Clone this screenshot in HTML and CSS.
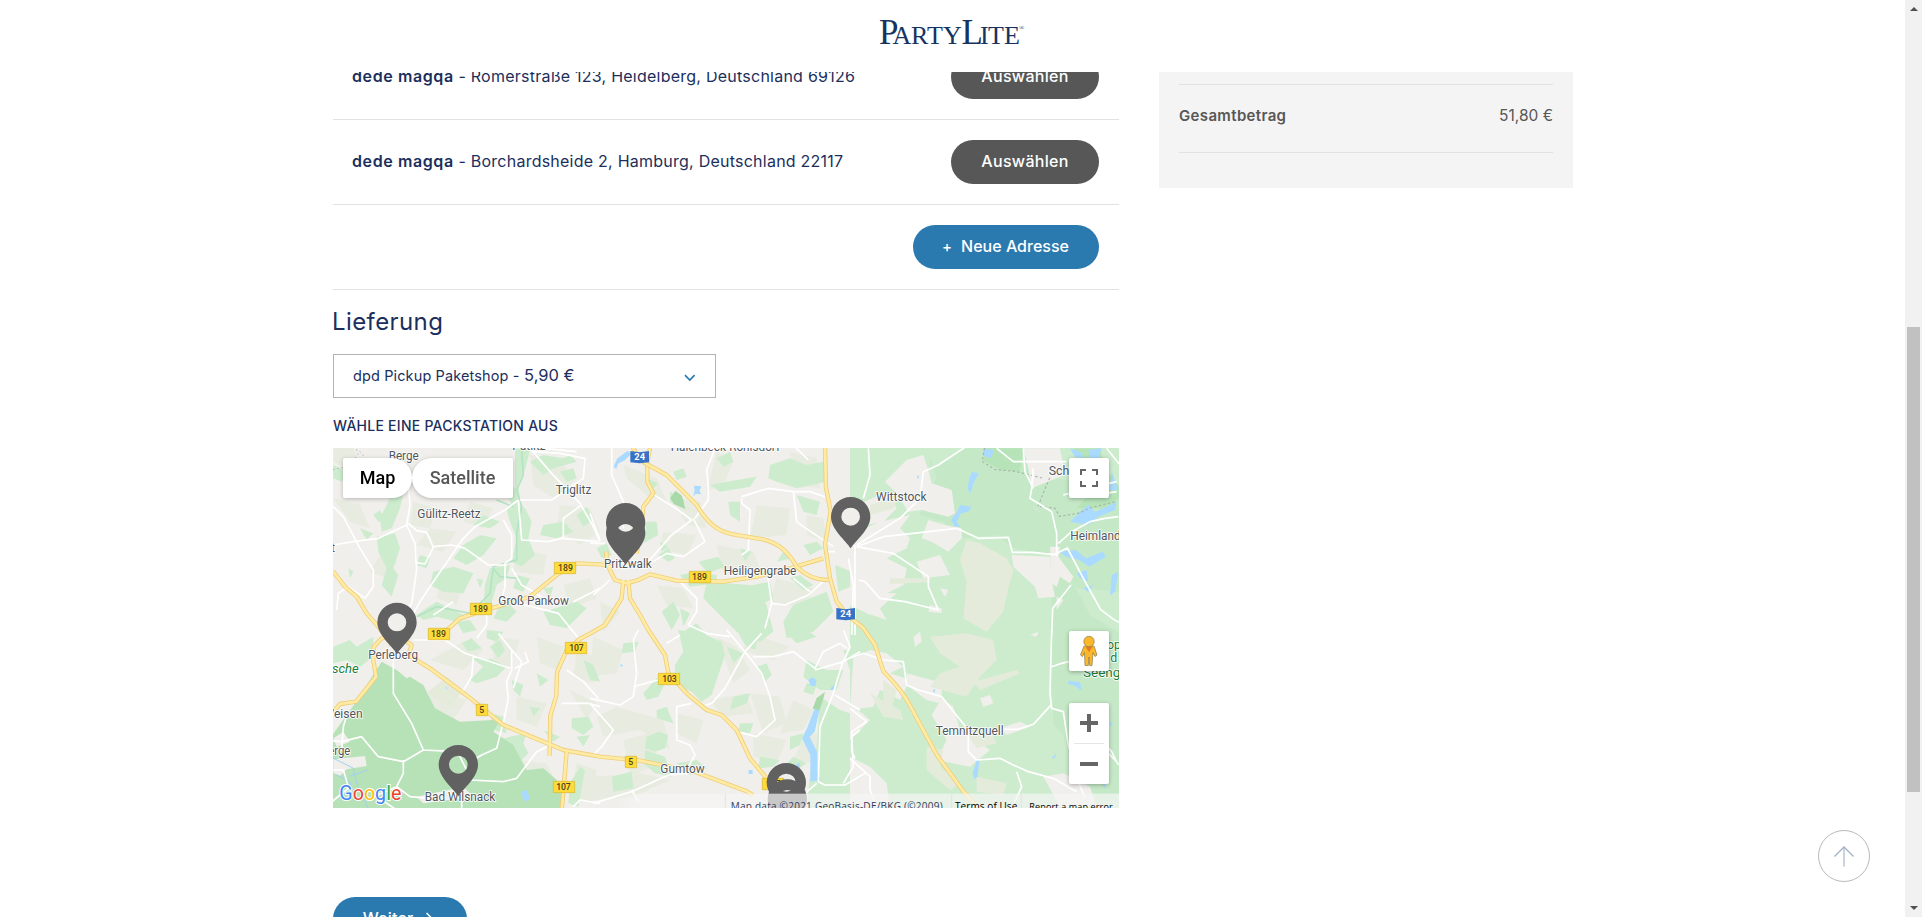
FILE: index.html
```html
<!DOCTYPE html>
<html lang="de">
<head>
<meta charset="utf-8">
<title>PartyLite – Kasse</title>
<link rel="stylesheet" href="styles.css">
</head>
<body>
<header class="header">
  <svg class="logo" width="146" height="32" viewBox="0 0 146 32" role="img" aria-label="PartyLite">
    <text class="logo-text" y="28"><tspan class="lg" x="0">P</tspan><tspan x="13.500">A</tspan><tspan x="32">R</tspan><tspan x="48">T</tspan><tspan x="64">Y</tspan><tspan class="lg" x="82.5">L</tspan><tspan x="101">I</tspan><tspan x="109">T</tspan><tspan x="125">E</tspan><tspan class="reg" x="140" y="14">®</tspan></text>
  </svg>
</header>

<main class="page">
  <section class="checkout">
    <div class="row">
      <p class="address"><b>dede magqa</b><span class="street"> - Römerstraße 123, Heidelberg, Deutschland 69126</span></p>
      <button class="btn btn-dark">Auswählen</button>
    </div>
    <div class="row">
      <p class="address"><b>dede magqa</b><span class="street"> - Borchardsheide 2, Hamburg, Deutschland 22117</span></p>
      <button class="btn btn-dark">Auswählen</button>
    </div>
    <div class="row row-end">
      <button class="btn btn-blue btn-new"><span class="plus">+</span><span>Neue Adresse</span></button>
    </div>

    <h2 class="title">Lieferung</h2>
    <div class="select">
      <span class="select-text"><span class="carrier">dpd Pickup Paketshop -</span> <span class="fee">5,90 €</span></span>
      <svg width="12" height="8" viewBox="0 0 12 8"><path d="M1 1.2 5.8 6 10.6 1.2" fill="none" stroke="#2a7ab0" stroke-width="1.7"/></svg>
    </div>
    <h3 class="subtitle">WÄHLE EINE PACKSTATION AUS</h3>

    <div class="map">
      <svg class="map-canvas" width="786" height="360" viewBox="0 0 2358 1080">
        <defs>
          <path id="pin" fill-rule="evenodd" d="M0 0C-14-24-59-56-59-95a59 59 0 1 1 118 0C59-56 14-24 0 0zM0-122a28 27 0 1 0 0 54a28 27 0 1 0 0-54z"/>
          <g id="federal">
            <path d="M0 370l36 46 35 30 30 50 35 40 40 55"/>
            <path d="M1 791l20-23 48-7 60-75-8-50 2-40 23-25 45-10 45 30-10 30 65 40 115 85 105 85 180 75 110 20 120 12 160 32 160 60 20 12"/>
            <path d="M336 551l45-40 60-20 150-45 80-65 60-35 70 3 40 7M820 311l1 35 25 50 35 10 35-10 35-17 80 19 140 3 100-15 100-25 100-30"/>
            <path d="M951 1l-8 40 0 60 18 35-30 40-5 55-15 85"/>
            <path d="M871 396l-5 55-50 80-45 26-31 16-40 35-28 65-2 70-18 60-2 120M701 911l-15 180M886 396l5 55 30 50 25 45 50 75 10 55 55 60 60 50 45 15 45 45 40 85 50 60 90 25"/>
          </g>
          <path id="autobahn" d="M896-9c20 40 30 50 50 60s35 20 55 30l90 90c30 50 60 80 110 88l70 12c70 8 100 50 120 85 30 30 60 40 95 40M1476 0l3 120 14 70-17 100 15 100 20 70 30 40 50 40 35 50 25 80c60 60 80 100 100 140l60 110 80 110 80 90"/>
        </defs>
        <rect width="2358" height="1080" fill="#f0efeb"/>

        <!-- fields -->
        <g class="field">
          <path transform="translate(-9 -9)" d="M10 10h60l15 40-40 20-35-20zM250 170l70 20-20 60-60-10zM300 250l80 10-40 60-80-20zM150 330l50 20-30 50-50-20zM600 30l80 10 60 60-70 60-60-40zM690 180l90 10 30 70-60 40-70-50zM420 170l70 20-30 60-60-20zM560 310l90 20-10 60-90-10zM10 160l80 20 30 70-60-20zM330 400l70 20-20 60-60-20zM700 420l80-20 20 60-80 30z"/>
          <path transform="translate(771 -9)" d="M100 60l100 40 30 70-60-20-60-50zM250 160l80 10 20 80-60-10zM380 20l50 30-30 70-50 20zM500 180l100 10-10 80-110 10zM600 20l80 20 10 90-70-10zM220 260l100 10-30 60-80-20zM380 300l110 20 20 50-110 10zM560 400l110 30-20 60-110-20zM30 470l60 30-50 60zM650 210l50 10 10 70-60-20zM200 420l80 10 30 60-80-10z"/>
          <path transform="translate(-9 546)" d="M300 90l110-60 50 30-60 60zM300 180l110 30-40 60-70-40zM490 20l80 10-30 80-50-10zM560 200l90 20-30 70-60-20zM620 20l80 30-20 70-50-20zM740 60l60 20-10 80-60-20zM570 390l80 10 30 60-70 10zM740 400l60 20-10 100-70-20zM720 180l80 40-30 50z"/>
          <path transform="translate(771 546)" d="M10 20l90 40-20 70-80 10zM20 260l60-30 140 40 20 90-90-60-110 20zM100 330l80-20 30 90-90 40zM360 210l110-20 20 60-90 10zM380 20l60 30 40 70-50 40zM480 190l90 10 20 80-70 30zM260 250l80 20-20 70-60-30zM490 310l100 20-30 70-70-20zM610 210l60 30-30 60-70 10zM10 440l140-10 90 20-110 50-120 10zM450 60l60-40 90 30-50 40zM650 300l50 20-30 80-60-10z"/>
        </g>

        <!-- woods -->
        <g class="wood">
          <path transform="translate(-9 -9)" d="M205 60h30l-10 60-15 70-25 60-30 10-5-40 25-50zM140 275l55-10 15 45-20 60 15 20-20 65-30-35 15-50-25-50zM130 210l20-15 15 30-20 5zM90 250l40 15-20 20zM55 370l15 10-10 20zM555 10l45 5-15 60-20 40 5 50-20 30-15-40 20-30zM530 195l30-20 25 15 20 40-10 50 20 50-40 35-30-15 15-70-20-50zM460 210l50 20-30 20-50-10zM400 300l50-30 50 10-40 50-50 30-40-20zM310 380l60-15 60 20-30 60-60-5-40-20zM270 330l30 10-10 30-30-10zM600 50l40-20 60 10 20-10 20 20-70 20-30 20zM640 240l60-10 30 30-50 20-50-10zM480 370l60-10-10 40-30 20-20 70-20 10 5-80zM560 390l40 10-20 40-30-10zM290 490l30-20 40 20 40 20-20 20-60-15-40 10-20-15zM440 400l20 5-10 25zM740 210l30-25 20 40-30 20zM520 460l40 40-30 30-40-10zM640 430l30-5-10 35zM640 500l100-30 30 20-60 60-50-10zM380 530l40-5 20 30-40 10zM10 60l45 20-20 30-25-10zM690 80l40-10 10 30-30 10z"/>
          <path transform="translate(771 -9)" d="M170 100l35 15-20 20zM240 140l45 25-10 15-35-10zM170 230l30 0 5 40-45 25zM250 80l30-10 10 25-30 10zM540 60l60-20 50 20 50-10 10 60-90 20-60-20-25-10zM360 120l80-15 60-10-20 30-90 15zM415 170l35 0 0 60-30-20zM620 150l70 20-10 40-40-10zM325 350l60-15 20 30-50 20zM350 410l130 10 50 60 20 80-40 30-70-30-60-60-40-40zM440 430l100-20 10 50-60 30zM270 390l50-10 60 10 0 25-80 10zM215 500l35-30 20 40-25 45zM270 490l30 15-20 40zM280 560l40-25 30 35-60 20zM610 480l100-40 20 60-60 60-80 20-10-50zM640 300l40-10 20 20-40 20zM205 330l30-20 20 30-20 10zM20 310l30-15 15 35-30 10zM560 350l20-30 25 20zM600 400l30-10 40 30-30 15zM210 290l25 15-20 15zM380 40l40-20 10 30-30 15zM450 310l35 10-20 30zM735 360l50 20 10 40-50 20z"/>
          <path transform="translate(-9 546)" d="M395 40l30-15 30 30-40 10zM470 0l50 5-20 30-30-10zM480 85l50 25-30 30-60 20-20-10 30-30zM545 150l35 15-10 35-20-20zM725 265l50-5 15 30-30 25-35-20zM740 320l40-5-20 35zM540 320l50-10-10 30 15 30-20 20-40-20-40 20 10-60zM10 50l50-20 20 20 50-30 0 60-40 30-40-20-40 10zM480 250l40 10 10 50-40-10zM640 300l50 20-20 15zM760 90l30 15 20 50-30-5zM620 130l35 20-25 20zM720 460l30-50 15 10-20 110-30-10zM420 80l60 10-20 20zM600 230l30 5-20 25zM480 50l30-20 15 30-20 25z"/>
          <path transform="translate(771 546)" d="M265 0l70 10 60 25 10 40-40 120-30 20-30-30-50-20 0-60 25-40zM100 40l45-5-10 30-40 5zM160 190l40-45 25 15-20 40-35 10zM200 240l30-10 20 50-50-15zM170 320l35-15 30 10-10 40-30 10-30-10zM165 360l60 20 20 60-50-10-30-25zM65 440l60-15 5 50-60 10zM260 400l60-10 30 25-50 20zM410 50l50 20-30 30zM440 0l40 20 30-15-15 55-30-15zM500 110l30-10 15 35-20 20zM430 200l50-10-10 30-50 20zM650 90l60 30 50 0-20 60-50 0-50-40zM690 200l60 40 60 20v280h-160l10-110 20-80zM590 10l60-10 30 20-60 20zM600 320l40-10-10 35-30 15zM610 380l40 20-30 20-30-20zM450 280l40 0-10 30-35-5zM510 380l60 10-20 20-45 5zM650 160l30 5-10 30-30-10zM760 60l60 10v60l-40-10z"/>
          <path transform="translate(1551 -9)" d="M0 0h900v1100H60l-60-120z"/>
        </g>
        <g transform="translate(1551 -9)">
          <path fill="#c5e9c7" d="M240 70l40-20 70-50h190l10 190 60 40 10 100-70-10-60-10-50-40-100 10-60-50-70-20 10-50 40-60-20-60zM610 330l30 30 80 150 100 60v500H700l-60-200-30-30-10-280zM530 80l280 60v300l-130-10-60-100-10-90-60-60z"/>
          <path fill="#b6e4b8" d="M400 10h120l-10 70-60-5-50-30zM670 10h80l15 60 55 70-40 50-100 0 80-90-80-50z"/>
          <path fill="#f0efeb" d="M170 45l50-15 15 45 10 40 60 20 10 70-20 10-80-20-40 5-40-60-30-30zM0 190l110-50 30 50-40 40-50 10-50 20zM520 10h110l15 80-100 40-10-60zM0 270l90-40 90-20-30 40 30 30-10 30-60 30 60 30-10 50-60 30-40 60-60-30zM235 225l50 15 50 10 0 30-40 40-50-30-30-10zM50 400l80 15-30 30 40 0-50 45 20 35-60-20-50-60zM200 350l70-20 30 60-80 10zM485 330l115 5 5 70 10 50-50 5-10-35-65-60zM600 305l30 0-5 30 45 60-10 20-30-20-10 30-15-10zM620 455l20 10-20 30zM240 480l35 10 0 15-40-5zM420 455h20v20h-20zM270 430l25 5-10 20z"/>
          <path fill="#e5ebda" d="M350 285l40 10 80 45 20 35-15 55-15 70-50 60-70-40 10-110-20-65zM120 400l120 0 0 12-120 5zM60 180l90-30-20 40-70 20z"/>
        </g>
        <g transform="translate(1551 546)">
          <path fill="#f0efeb" d="M10 85l50-25 50 10 50 40-40 20 60 20-30 60-60-30-20 50-70 10zM170 130l110 30-10 60-40-10-60-45zM0 220l60 50-60 60zM245 255l30-50 35 25 20 70 90 60-60 50-100-20 30-60zM390 205l30-10 10 25-30 10zM450 295l60-20 30 15-70 25zM540 15l25-10-5 15zM0 380l60 30 50 50 10 70H0zM580 440l60-10 80 40 20 60h-110zM190 20l20-15 5 30-20 15z"/>
          <path fill="#e5ebda" d="M240 20l110-10 80 20 10 60-50 50-40 60-110-30 30-40 60-20-60-40zM370 155l130-35 10 10-120 50zM350 310l70-10 20 40-60 15zM60 190l90 50 10 30-60-10zM230 350l50 10-10 50 60 50-30 20-70-60zM380 440l90 20-10 35-80-10zM100 150l40 30-20 70-20-20z"/>
        </g>

        <!-- nature reserve in the south-west -->
        <g transform="translate(-9 546)">
          <path fill="#b7e2b8" d="M155 95l45 25 30 25 10-5 40 25 35 70 75 40 100-5 15 10-15 25 60 40 40 75 50-5 40 35 20 65-10 50H0V325l75-105z"/>
          <path fill="#f0efeb" d="M10 325l30-20 20 30-40 15zM10 388l95-10 5 30-60 10-20 20-20-10zM260 500l140-30 30 30-150 20z"/>
          <path fill="#e5ebda" d="M290 190l60-50 50 40-40 50z"/>
        </g>

        <!-- lakes and streams -->
        <g fill="#aadaff">
          <path transform="translate(771 -9)" d="M112 18l12 8-20 20-20 10-5 15-8-5 10-25zM312 122l22 2-6 14 6 10-16-2-8 8 4-18z"/>
          <path transform="translate(1551 -9)" d="M365 80l22 5-15 25-10 35-10-15 5-25zM330 180l35 5-10 15-22 5-13 25 10 15-15 0-13-20 18-22zM400 10l30 5-5 25-25-8zM660 10l30 10 15 20-30-5zM715 15l40-5-10 30-25 0zM660 230l30-30 25-20 20 20 35-15 30-15-5 25-50 20-30 25zM785 80l20 55-25 0zM628 320l50-5 30 25 50-20 10 15-50 30-30-20-40-10zM680 385l30-10 5 35-25-10zM785 390l20-10-10 60-15 10zM700 430l30-10-15 20zM200 90l8 5-4 7z"/>
          <path transform="translate(771 546)" d="M655 150l12-8 12 8-2 18-15 0zM672 240l20-15-8 35-10 45-15 15 22 45 0 60 10 25-30 5 0-80-25-50 15-30zM725 170l10-5-5 15-10 0zM476 420h12v12h-12zM620 400h10v14h-10zM90 104h8v5h-8z"/>
          <path transform="translate(1551 546)" d="M655 152l35 5 5 25-20-15-20-5zM380 390l8 0-5 50-10 8-5-18zM760 450l10 30-15-20zM248 180l8-2-3 12zM780 275l8 5-8 8zM605 385l14-15-5 15z"/>
          <path transform="translate(-9 546)" d="M575 485l15-5 10 25-10 10-12-10zM345 170l8 3-3 5z"/>
        </g>
        <path fill="none" stroke="#b4e3c4" stroke-width="5" d="M566 6l5 75-20 45 15 50-15 80 0 80-70 20-10 80-60 60-100-20-60 30M491 156l50 20M481 361l20 25 55 5"/>
        <path fill="none" stroke="#9fd0f2" stroke-width="3" d="M0 930l60 30 15 60 30 60M10 980l40 20 20 60M50 985l55-20"/>
        <path fill="#a9d9a8" d="M1451 750l25-18-5 20-12 35-20-5zM1012 150l15-22 20 15 10 40-35-15z"/>
        <path fill="none" stroke="#a5b5a7" stroke-width="3.5" stroke-dasharray="7 7" d="M1955 0l-8 40 40 25 60 5 80 20M2150 90l-15 35-20 50 50 5 15 25 60-10 30-15 80-20"/>
        <path fill="none" stroke="#b7b9b8" stroke-width="3" stroke-dasharray="5 8" d="M0 65l45-10 30-35-5-20M80 10l40 45"/>

        <!-- minor roads -->
        <g class="road">
          <path transform="translate(-9 -9)" d="M235 120l5 60-10 60-85 40-75 10-60 10M10 185l30 30 50 95 40 65 0 50-25 35-50-35-30 20-5 50M230 240l25 55 5 80-15 100-20 30M235 235l25 22 30 5 20 45-25 50-30-5M310 305l55-5 40 10 70 50 55 0M565 165l-40 30-90 50-35 35-90 130-40 60-50 90M565 165l10 120 80 5 40-10 110 10M600 10l65 75 85 90 40 70 20 45M610 20l80 5 75 15-5 60-95 65-95 0M640 10l100 10M755 180l-55 40 0 60M520 225l25 45 0 70-20 15 0 70-10 40 90 20 80 20 65 80M545 370l30 50 100 60M810 430l-80 40M470 480l0 60-30 40M370 470l-60 40"/>
          <path transform="translate(771 -9)" d="M65 10l0 80 35 80 0 80M185 145l80 50 40 30-60 45-70 80M310 220l35 70-65 45-50-10-40 25M350 75l25-65 90 0 150-5 40 40M350 75l5 50 0 40-40 55M455 160l0 15 25 20-5 120-20 15M455 155l80-25 75 10 50 0 45 15M610 140l10 90 20 15 90 60M530 375l5 30 10 70 40 5 70-30 55-50M545 475l-20 75M260 400l60 60 0 40-25 40 55 25 70 10M610 400l50 40M0 205l30 80M775 340l15 80-5 150M0 295l45 0M735 320l-20 0M60 405l-50 45"/>
          <path transform="translate(1551 -9)" d="M55 10l5 80-20 70M20 300l130-80 60-60 10-80 45-20 90-60M20 305l80-30 90-10 130-15 65 30 90-3 12 45 60 0 65 7 40-20 50 95 50 90 40 30 50 25M20 305l110 20 105 70 0 30 30 70-100-25-75-10-45-50-20-5M440 10l50 40 160 0M550 70l-5 60-5 30 65 40 15 65 0 70M520 10l5 70 25 50M625 295l40-35 55-30 45-10 40-5M605 570l3-80 55-70M740 150l60-10M770 10l40 50M800 110l-90 20-70 20M15 300v270"/>
          <path transform="translate(-9 546)" d="M190 80l0 110 55 90 35 80-60 35-75-15-50-60-60 15-55-5M280 360l100 5M220 390l0 40-20 40-70 30M200 470l40 30 60 5M380 360l30 60 10 30 100 5 40-10 60-80 30-15M430 390l25-15 45-20 20-80M520 280l15-75-5-50 15-35 0-60 30 35-25 80M545 60l-40-50M250 30l95 0 60 40 135 45M430 80l-5 60-30 50M555 115l40-20-10-30M710 120l50 35 45 50M695 220l80 0 35 10M10 420l30 0 15 50M55 240l-15 50-5 70 20 5M395 495v40M730 530l20-20 60 10M140 500l90 60M0 520l60-50"/>
          <path transform="translate(771 546)" d="M145 0l-15 30 10 100-10 70-40 25-90-20M130 170l75-20M230 40l40-25M0 220l70 80-35 50-25 25M410 0l55 65-60 110-40 45-30 10M465 65l50-55M465 65l50 65 25 70 15 70-55 50-60-15M490 80l60 0 60-15 65 50 25-50 50-25 20 15M675 120l85-25 50-30M760 90l-30 100-40 100-5 165 20 10 60 0 60-35M735 195l75 45M260 230l45-10M260 230l0 100 40 15 15 30-20 35M10 520l115-35 110-50 60-5M125 480l20 35M810 300l-25 20 5 90-30 50M680 460l-35 30M760 0l20 50-20 45"/>
          <path transform="translate(1551 546)" d="M0 85l40-15 60 20 60 5 10 70 35 15 70 20 60 75 20 25 0 65 25 25 70-5 40 20 45 20 75 20 70 40M455 298h50l45-15 55-60M605 0l-5 190 5 45 35 10 15 100 30 110 20 50M605 110l30-10 40-10M660 335l90 10 50 50M500 425l15 45-20 45M0 385l60 55 0 40 20 50M0 235l50 40-45 30v60l10 20M760 335l25 30 20 40"/>
        </g>

        <!-- federal roads and motorway: casing, then surface -->
        <g class="highway">
          <use href="#federal" class="casing"/><use href="#federal" class="surface"/>
          <use href="#autobahn" class="casing"/><use href="#autobahn" class="surface"/>
        </g>

        <!-- road shields -->
        <g class="shield">
          <g transform="translate(-9 -9)"><path d="M673 352h64v34h-64zM421 475h64v34h-64zM295 550h64v34h-64z"/><text x="684" y="379" textLength="45">189</text><text x="429" y="502" textLength="45">189</text><text x="303" y="577" textLength="45">189</text></g>
          <g transform="translate(771 -9)"><path d="M298 379h64v34h-64z"/><text x="306" y="406" textLength="45">189</text></g>
          <g transform="translate(-9 546)"><path d="M706 37h64v34h-64zM439 223h34v34h-34zM670 454h64v34h-64z"/><text x="718" y="63" textLength="43">107</text><text x="448" y="250">5</text><text x="679" y="480" textLength="43">107</text></g>
          <g transform="translate(771 546)"><path d="M205 130h64v34h-64zM106 379h34v34h-34zM517 445h64v34h-64z"/><text x="217" y="156" textLength="43">103</text><text x="115" y="406">5</text><text x="528" y="472">107</text></g>
        </g>
        <g class="shield-a"><path d="M892 9l28 4 28-4v34l-28 3-28-3zM1510 480l28 4 28-4v34l-28 3-28-3z"/><text x="904" y="37" textLength="32">24</text><text x="1522" y="508" textLength="32">24</text></g>

        <!-- place names -->
        <g class="place">
          <g transform="translate(-9 -9)"><text x="176" y="46" textLength="90" lengthAdjust="spacingAndGlyphs">Berge</text><text x="547" y="15" textLength="100" lengthAdjust="spacingAndGlyphs">Putlitz</text><text x="677" y="147" textLength="107" lengthAdjust="spacingAndGlyphs">Triglitz</text><text x="262" y="220" textLength="190" lengthAdjust="spacingAndGlyphs">Gülitz-Reetz</text><text x="505" y="481" textLength="212" lengthAdjust="spacingAndGlyphs">Groß Pankow</text><text x="3" y="321">t</text></g>
          <g transform="translate(771 -9)"><text x="242" y="19" textLength="328" lengthAdjust="spacingAndGlyphs">Halenbeck-Rohlsdorf</text><text x="42" y="370" textLength="143" lengthAdjust="spacingAndGlyphs">Pritzwalk</text><text x="401" y="391" textLength="218" lengthAdjust="spacingAndGlyphs">Heiligengrabe</text></g>
          <g transform="translate(1551 -9)"><text x="78" y="169" textLength="152" lengthAdjust="spacingAndGlyphs">Wittstock</text><text x="596" y="91">Schwein</text><text x="661" y="286" textLength="151" lengthAdjust="spacingAndGlyphs">Heimland</text></g>
          <g transform="translate(-9 546)"><text x="115" y="88" textLength="149" lengthAdjust="spacingAndGlyphs">Perleberg</text><text x="-20" y="265" textLength="118" lengthAdjust="spacingAndGlyphs">Weisen</text><text x="-122" y="376" textLength="183" lengthAdjust="spacingAndGlyphs">Wittenberge</text><text x="284" y="513" textLength="212" lengthAdjust="spacingAndGlyphs">Bad Wilsnack</text></g>
          <g transform="translate(771 546)"><text x="211" y="430" textLength="133" lengthAdjust="spacingAndGlyphs">Gumtow</text></g>
          <g transform="translate(1551 546)"><text x="257" y="315" textLength="204" lengthAdjust="spacingAndGlyphs">Temnitzquell</text></g>
          <g class="park"><text x="-3" y="675" font-style="italic" textLength="80" lengthAdjust="spacingAndGlyphs">sche</text><text x="2322" y="602">op</text><text x="2332" y="642">d</text><text x="2250" y="686" textLength="112" lengthAdjust="spacingAndGlyphs">Seeng</text></g>
        </g>

        <g class="pins">
          <use href="#pin" x="192" y="618"/><use href="#pin" x="878" y="319"/><use href="#pin" x="878" y="350"/><use href="#pin" x="1553" y="301"/><use href="#pin" x="376" y="1045"/><use href="#pin" x="1360" y="1099"/><use href="#pin" x="1363" y="1148"/>
        </g>
        <text class="google" x="19" y="1057" textLength="186" lengthAdjust="spacingAndGlyphs"><tspan fill="#4285f4">G</tspan><tspan fill="#ea4335">o</tspan><tspan fill="#fbbc05">o</tspan><tspan fill="#4285f4">g</tspan><tspan fill="#34a853">l</tspan><tspan fill="#ea4335">e</tspan></text>
        <linearGradient id="fade"><stop offset="0" stop-color="#f5f5f5" stop-opacity="0"/><stop offset=".05" stop-color="#f5f5f5" stop-opacity=".7"/></linearGradient>
        <rect x="850" y="1037" width="1508" height="43" fill="url(#fade)"/>
        <path stroke="#ddd" stroke-width="2" d="M1177 1037v43M1856 1037v43M2065 1037v43"/>
        <g class="legal"><text x="1193" y="1087" textLength="636" fill="#333c5a">Map data ©2021 GeoBasis-DE/BKG (©2009)</text><text x="1866" y="1087" textLength="187">Terms of Use</text><text class="report" x="2089" y="1087" textLength="250">Report a map error</text></g>
      </svg>

      <div class="map-types"><button class="type type-map">Map</button><button class="type type-sat">Satellite</button></div>
      <button class="ctl full" aria-label="Vollbild"><svg width="18" height="18" viewBox="0 0 18 18"><path d="M0 0h6v2H2v4H0zM12 0h6v6h-2V2h-4zM0 12h2v4h4v2H0zM16 12h2v6h-6v-2h4z" fill="#666"/></svg></button>
      <button class="ctl peg" aria-label="Street View"><svg width="18" height="32" viewBox="0 0 18 32"><g fill="#fbb829" stroke="#8a7a50" stroke-width=".7"><path d="M4 11h10l3 9-2 1.5-2-4-1 13H9.7L9 22l-.7 8.500H5l-.5-13-2 4-2-1.500z"/><circle cx="9" cy="6.500" r="5.200"/></g><path d="M5.500 12h7L9 17z" fill="#e57a26"/></svg></button>
      <div class="zoom"><button class="zbtn" aria-label="Zoom in"><svg width="18" height="18" viewBox="0 0 18 18"><path d="M7 0h4v7h7v4h-7v7H7v-7H0V7h7z" fill="#666"/></svg></button><span class="zline"></span><button class="zbtn" aria-label="Zoom out"><svg width="18" height="4" viewBox="0 0 18 4"><path d="M0 0h18v4H0z" fill="#666"/></svg></button></div>
    </div>

    <button class="btn btn-blue btn-next"><span>Weiter</span><svg width="8" height="12" viewBox="0 0 8 12"><path d="M1.500 1 6.500 6l-5 5" fill="none" stroke="#fff" stroke-width="1.500"/></svg></button>
  </section>

  <aside class="summary">
    <div class="total"><b>Gesamtbetrag</b><span>51,80 €</span></div>
  </aside>
</main>

<button class="to-top" aria-label="Nach oben"><svg width="20" height="21" viewBox="0 0 20 21"><path d="M10 1v19.500" stroke="#ccd2de" stroke-width="2"/><path d="M.5 10.500 10 1l9.500 9.500" fill="none" stroke="#a3b1c6" stroke-width="1.300"/></svg></button>
<div class="scrollbar"><i class="up"></i><i class="thumb"></i><i class="down"></i></div>
</body>
</html>
```
FILE: styles.css
```css
* { box-sizing: border-box; }
body { margin: 0; height: 917px; overflow: hidden; background: #fff; color: #1c2f5c; font-family: Inter, "Open Sans", sans-serif; font-size: 16px; }
button { margin: 0; padding: 0; border: 0; background: none; font: inherit; color: inherit; }
h2, h3, p { margin: 0; font-weight: 400; }

.header { position: absolute; z-index: 5; inset: 0 17px auto 0; height: 72px; padding: 16px 0 0 879px; background: #fff; }
.logo { display: block; overflow: visible; }
.logo-text { font: 26px "Liberation Serif", serif; fill: #17335f; }
.logo-text .lg { font-size: 35px; }
.logo-text .reg { font-size: 7px; }

.page { display: flex; align-items: flex-start; gap: 40px; padding: 35px 0 0 333px; }
.checkout { width: 786px; }
.row { display: flex; justify-content: space-between; align-items: center; height: 85px; padding: 0 20px; border-bottom: 1px solid #e2e2e2; }
.row-end { justify-content: flex-end; }
.address { line-height: 24px; margin: -2px 0 0 -1px; white-space: pre; }
.address b { font-weight: 600; letter-spacing: .6px; }
.street { letter-spacing: .24px; }
.btn { display: flex; align-items: center; justify-content: center; height: 44px; border-radius: 22px; color: #fff; font-weight: 500; white-space: nowrap; padding-bottom: 2px; }
.btn-dark { width: 148px; background: #575757; letter-spacing: .3px; }
.btn-blue { background: #2a7ab0; }
.btn-new { width: 186px; gap: 9px; padding-right: 1px; }
.plus { font-weight: 500; font-size: 15px; }
.btn-next { width: 134px; height: 45px; margin-top: 89px; gap: 12px; padding: 0 4px 4px 0; letter-spacing: .2px; }

.title { height: 64px; padding-top: 16px; font-size: 24px; line-height: 32px; letter-spacing: .4px; margin-left: -1px; }
.select { display: flex; align-items: center; justify-content: space-between; width: 383px; height: 44px; padding: 0 19px; border: 1px solid #b3b3b3; }
.select-text { margin-top: -2px; }
.select svg { margin-top: 3px; }
.carrier { font-size: 14.5px; letter-spacing: .12px; }
.fee { font-size: 16.5px; }
.subtitle { height: 50px; padding-top: 18px; font-size: 14px; font-weight: 500; line-height: 20px; letter-spacing: .25px; white-space: nowrap; }

.map { position: relative; width: 786px; height: 360px; overflow: hidden; font-family: Roboto, sans-serif; }
.map-canvas { display: block; }
.field { fill: #e8ece0; }
.wood { fill: #cdecce; }
.road { fill: none; stroke: #fff; stroke-width: 5; stroke-linejoin: round; }
.highway { fill: none; stroke-linejoin: round; }
.casing { stroke: #f0cd78; stroke-width: 13; }
.surface { stroke: #ffeba3; stroke-width: 8; }
.shield path { fill: #fedb39; stroke: #d8b42b; stroke-width: 2; }
.shield text { font: 500 26px Roboto, sans-serif; fill: #4d421c; }
.shield-a path { fill: #3872c5; }
.shield-a text { font: 700 28px Roboto, sans-serif; fill: #fff; }
.place text { font-family: Roboto, sans-serif; font-size: 37px; fill: #50565d; stroke: #fff; stroke-width: 5; stroke-linejoin: round; paint-order: stroke; }
.place .park text { fill: #188038; }
.pins { fill: #616161; }
.google { font: 400 60px Roboto, sans-serif; stroke: #fff; stroke-width: 6; paint-order: stroke; }
.legal { font: 30px "Open Sans", sans-serif; }
.legal .report { font-size: 27px; }

.map-types { position: absolute; left: 10px; top: 10px; display: flex; filter: drop-shadow(0 1px 2px rgba(0,0,0,.25)); }
.type { height: 40px; background: #fff; font: 500 18px Roboto, sans-serif; padding-bottom: 1px; }
.type-map { width: 69px; border-radius: 2px 20px 20px 2px; color: #000; }
.type-sat { width: 101px; border-radius: 20px 2px 2px 20px; color: #565656; }
.ctl, .zoom { position: absolute; right: 10px; width: 40px; background: #fff; border-radius: 2px; box-shadow: 0 1px 4px rgba(0,0,0,.3); }
.ctl { height: 40px; display: flex; align-items: center; justify-content: center; }
.full { top: 10px; }
.peg { top: 183px; }
.zoom { top: 255px; height: 81px; display: flex; flex-direction: column; align-items: center; }
.zbtn { display: flex; flex: 1; align-items: center; }
.zline { width: 30px; height: 1px; background: #e6e6e6; }

.summary { width: 414px; height: 153px; padding: 49px 20px 0; background: #f4f4f4; color: #575757; font-size: 15px; }
.total { display: flex; justify-content: space-between; height: 69px; padding-top: 20px; border: solid #e2e2e2; border-width: 1px 0; line-height: 22px; }
.total b { font-weight: 600; letter-spacing: .35px; }
.total span { font-size: 15.5px; }

.to-top { position: absolute; left: 1818px; top: 830px; width: 52px; height: 52px; border: 1px solid #b9b9b9; border-radius: 50%; background: #fff; display: flex; align-items: center; justify-content: center; }
.scrollbar { position: absolute; z-index: 6; right: 0; top: 0; width: 17px; height: 917px; background: #f1f1f1; display: flex; flex-direction: column; align-items: center; }
.up { margin-top: 7px; border: solid transparent; border-width: 0 4px 4px; border-bottom-color: #505050; }
.thumb { width: 13px; height: 465px; margin-top: 316px; background: #c1c1c1; }
.down { margin-top: 114px; border: solid transparent; border-width: 4px 4px 0; border-top-color: #505050; }
```
